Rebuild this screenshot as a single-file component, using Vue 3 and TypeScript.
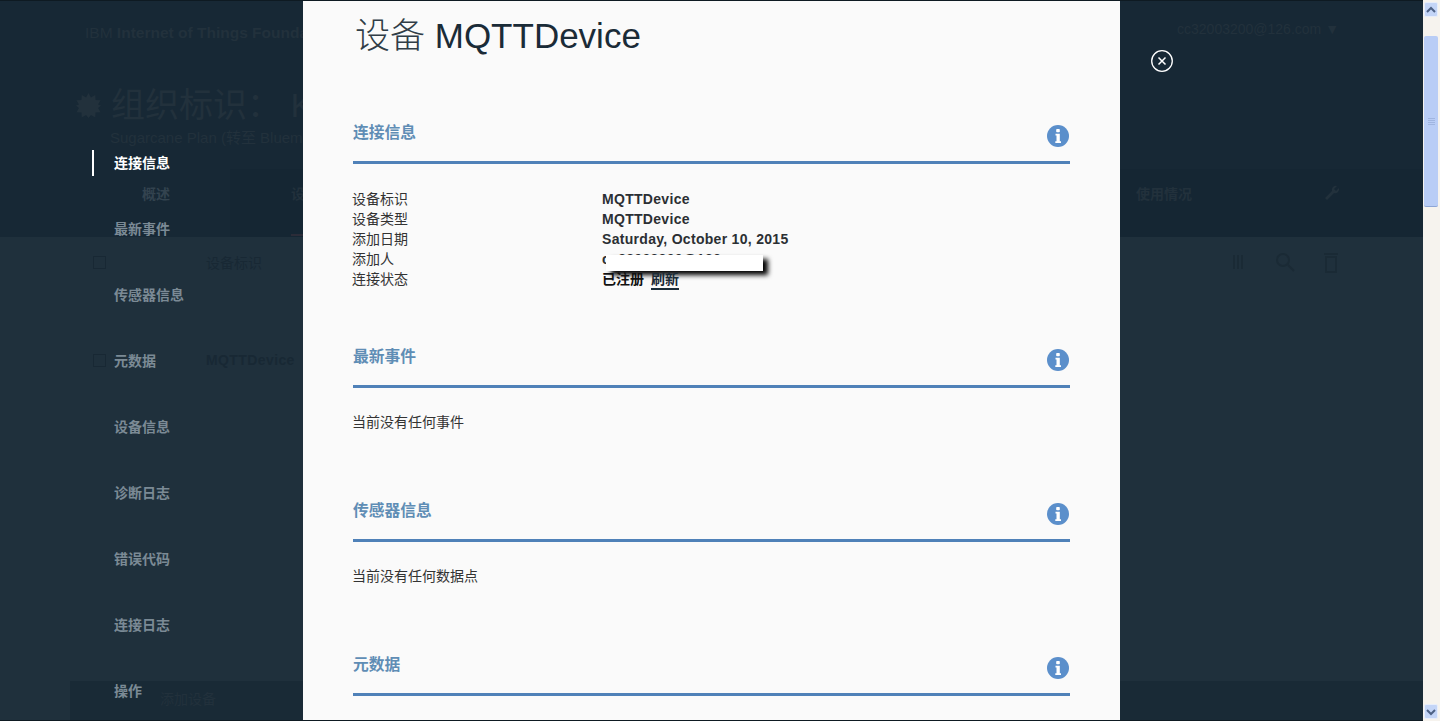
<script setup lang="ts">
interface Section {
  title: string;
  empty?: string;
  rows?: { label: string; value: string }[];
}

const navItems = ['连接信息', '最新事件', '传感器信息', '元数据', '设备信息', '诊断日志', '错误代码', '连接日志', '操作'];

const sections: Section[] = [
  {
    title: '连接信息',
    rows: [
      { label: '设备标识', value: 'MQTTDevice' },
      { label: '设备类型', value: 'MQTTDevice' },
      { label: '添加日期', value: 'Saturday, October 10, 2015' },
    ],
  },
  { title: '最新事件', empty: '当前没有任何事件' },
  { title: '传感器信息', empty: '当前没有任何数据点' },
  { title: '元数据' },
];
</script>

<template>
  <div class="viewport">
    <div class="page">
      <div class="backdrop">
        <header class="dash-header">
          <div class="topbar">
            <span class="brand"><span class="ibm">IBM</span> Internet of Things Foundation</span>
            <span class="account">cc32003200@126.com ▼</span>
          </div>
          <div class="org">
            <svg class="gear" viewBox="0 0 28 28" fill="currentColor">
              <path d="M14 1l2.500 4.600 4.500-2.600 0.300 5.200 5.200 0.300-2.600 4.500 3.100 1-3.100 2.500 2.600 4.500-5.200 0.300-0.300 5.200-4.500-2.600-2.500 3.100-2.500-3.100-4.500 2.600-0.300-5.200-5.200-0.300 2.600-4.500-3.100-2.500 3.100-1-2.600-4.500 5.200-0.300 0.300-5.200 4.500 2.600z" />
            </svg>
            <span class="org-name">组织标识： KY</span>
          </div>
          <div class="plan">Sugarcane Plan (转至 Bluemix 板</div>
          <nav class="tabs">
            <span class="tab tab--first">概述</span>
            <div class="tabs-rest">
              <span class="tab tab--marked">设备</span>
              <span class="tab tab--usage">使用情况</span>
              <svg class="wrench" viewBox="0 0 16 16" fill="currentColor">
                <path d="M15 3l-3 3-2-2 3-3a4 4 0 0 0-5 5L1 13l2 2 7-7a4 4 0 0 0 5-5z" />
              </svg>
            </div>
          </nav>
        </header>
        <section class="dash-body">
          <div class="table-head">
            <span class="check"></span>
            <span class="col-id">设备标识</span>
            <svg class="table-tools" viewBox="0 0 110 26" fill="none" stroke="currentColor" stroke-width="2">
              <path d="M3 6v14M7 6v14M11 6v14" />
              <circle cx="52" cy="11" r="6" />
              <path d="M57 16l6 6" />
              <path d="M93 5h14M95 8h10v15H95z" />
            </svg>
          </div>
          <div class="table-row">
            <span class="check"></span>
            <span class="col-id col-id--bold">MQTTDevice</span>
          </div>
          <div class="add-bar">添加设备</div>
        </section>
      </div>

      <div class="scrim">
        <aside class="side-nav">
          <a v-for="(item, i) in navItems" :key="item" class="nav-item" :class="{ 'nav-item--active': i === 0 }">{{ item }}</a>
        </aside>

        <main class="modal">
          <h1 class="modal-title"><span class="modal-title-cjk">设备</span> MQTTDevice</h1>

          <section v-for="(section, i) in sections" :key="section.title" class="block" :class="{ 'block--first': i === 0 }">
            <div class="block-head">
              <h2 class="block-title">{{ section.title }}</h2>
              <svg class="info" viewBox="0 0 22 22">
                <circle cx="11" cy="11" r="11" fill="#5b8fcb" />
                <rect x="9.200" y="4" width="3.600" height="3.200" rx="0.800" fill="#fff" />
                <path d="M8.500 8.800h4.300v7.400h1.200v1.800H8.300v-1.800h1.200v-5.600H8.500z" fill="#fff" />
              </svg>
            </div>
            <div v-if="section.rows" class="rows">
              <template v-for="row in section.rows" :key="row.label">
                <span class="row-label">{{ row.label }}</span>
                <span class="row-value">{{ row.value }}</span>
              </template>
              <span class="row-label">添加人</span>
              <span class="row-value row-value--mail">cc32003200@126.com<i class="redact"></i></span>
              <span class="row-label">连接状态</span>
              <span class="row-value row-value--status">已注册 <a class="refresh">刷新</a></span>
            </div>
            <p v-if="section.empty" class="empty">{{ section.empty }}</p>
          </section>
        </main>

        <div class="close-col">
          <button type="button" class="close" aria-label="关闭">
            <svg viewBox="0 0 22 22" fill="none" stroke="#fff">
              <circle cx="11" cy="11" r="10.300" stroke-width="1.300" />
              <path d="M7.500 7.500l7 7M14.500 7.500l-7 7" stroke-width="1.500" />
            </svg>
          </button>
        </div>
      </div>
    </div>

    <div class="scrollbar">
      <span class="sb-btn">
        <svg viewBox="0 0 10 8" fill="none" stroke="#4d6185" stroke-width="2"><path d="M1 6l4-4 4 4" /></svg>
      </span>
      <div class="sb-track">
        <span class="sb-thumb"><i></i><i></i><i></i><i></i></span>
      </div>
      <span class="sb-btn">
        <svg viewBox="0 0 10 8" fill="none" stroke="#4d6185" stroke-width="2"><path d="M1 2l4 4 4-4" /></svg>
      </span>
    </div>
  </div>
</template>

<style>
html,
body {
  margin: 0;
  overflow: hidden;
}
</style>

<style scoped>
.viewport {
  display: flex;
  width: 1440px;
  height: 721px;
  overflow: hidden;
  font-family: "Liberation Sans", "Noto Sans CJK SC", sans-serif;
  font-size: 14px;
}

.page {
  position: relative;
  flex: 1;
  min-width: 0;
  box-sizing: border-box;
  border-top: 1px solid #0e1a22;
  border-bottom: 1px solid #0e1a22;
}

/* dimmed dashboard behind the dialog */
.backdrop {
  display: flex;
  flex-direction: column;
  height: 100%;
  color: #22313c;
}

.dash-header {
  height: 236px;
  box-sizing: border-box;
  background: #172835;
}

.topbar {
  display: flex;
  justify-content: space-between;
  padding: 20px 84px 0 85px;
  height: 51px;
  box-sizing: border-box;
}

.brand {
  font-weight: 700;
  font-size: 15.500px;
  line-height: 24px;
}

.ibm {
  font-weight: 400;
}

.account {
  line-height: 16px;
}

.org {
  display: flex;
  align-items: center;
  gap: 9px;
  padding-left: 75px;
  height: 46px;
  margin-top: 30px;
}

.gear {
  width: 27px;
  height: 27px;
}

.org-name {
  font-size: 34px;
  line-height: 46px;
}

.plan {
  padding-left: 110px;
  font-size: 15px;
  line-height: 20px;
}

.tabs {
  display: flex;
  margin-top: 21px;
  height: 69px;
}

.tab {
  line-height: 50px;
  font-weight: 700;
  font-size: 14px;
}

.tab--first {
  width: 230px;
  box-sizing: border-box;
  padding-left: 142px;
  color: #33434f;
}

.tabs-rest {
  flex: 1;
  display: flex;
  background: #152633;
  padding-left: 61px;
  padding-right: 83px;
  align-items: flex-start;
}

.tab--marked {
  height: 65px;
  width: 60px;
  border-bottom: 2px solid #2b2c38;
}

.tab--usage {
  margin-left: auto;
  margin-right: 132px;
}

.wrench {
  width: 16px;
  height: 16px;
  margin-top: 16px;
}

.dash-body {
  position: relative;
  flex: 1;
  display: flex;
  flex-direction: column;
  background: #1f303c;
  color: #182834;
}

.table-head,
.table-row {
  display: flex;
  align-items: center;
  padding-left: 93px;
}

.table-head {
  height: 50px;
}

.table-row {
  height: 50px;
  margin-top: 48px;
}

.check {
  width: 11px;
  height: 11px;
  border: 1px solid #182834;
}

.col-id {
  margin-left: 100px;
}

.col-id--bold {
  font-weight: 700;
  letter-spacing: 0.4px;
}

.table-tools {
  width: 110px;
  height: 26px;
  margin-left: auto;
  margin-right: 82px;
  color: #1a2a35;
}

.add-bar {
  margin: auto 0 0 70px;
  height: 39px;
  line-height: 36px;
  padding-left: 90px;
  background: #192a36;
  color: #22313c;
  font-size: 14px;
}

/* dialog layer */
.scrim {
  position: absolute;
  inset: 0;
  display: flex;
  align-items: flex-start;
}

.side-nav {
  width: 303px;
  flex: none;
  box-sizing: border-box;
  padding: 149px 0 0 92px;
  display: flex;
  flex-direction: column;
  gap: 40px;
}

.nav-item {
  height: 26px;
  line-height: 26px;
  padding-left: 22px;
  font-weight: 700;
  font-size: 14px;
  color: #7b8a95;
}

.nav-item--active {
  color: #fff;
  padding-left: 20px;
  border-left: 2px solid #fff;
}

.modal {
  width: 817px;
  height: 719px;
  flex: none;
  box-sizing: border-box;
  padding: 0 50px;
  background: #fafafa;
  overflow: hidden;
}

.modal-title {
  margin: 13px 0 0 2px;
  font-size: 35px;
  line-height: 44px;
  font-weight: 400;
  color: #1a2b37;
}

.modal-title-cjk {
  color: #303d47;
  font-weight: 300;
}

.block--first {
  margin-top: 64px;
}

.block {
  display: block;
}

.block-head {
  display: flex;
  align-items: flex-end;
  justify-content: space-between;
  padding-bottom: 14px;
  border-bottom: 3px solid #4f81b8;
}

.block-title {
  margin: 0 0 3px;
  font-size: 15.750px;
  line-height: 22px;
  font-weight: 700;
  color: #5f8db5;
}

.info {
  width: 22px;
  height: 22px;
  flex: none;
  margin-right: 1px;
}

.rows {
  display: grid;
  grid-template-columns: 250px 1fr;
  grid-auto-rows: 20px;
  margin: 25px 0 57px -1px;
  line-height: 20px;
  color: #333;
}

.row-value {
  position: relative;
  font-weight: 700;
  letter-spacing: 0.3px;
  color: #2b2f33;
}

.row-value--mail {
  white-space: nowrap;
}

.redact {
  position: absolute;
  left: 4px;
  top: 6px;
  width: 157px;
  height: 16px;
  background: #fff;
  box-shadow: 5px 4px 5px #000;
}

.row-value--status {
  color: #111;
  letter-spacing: 0;
}

.refresh {
  margin-left: 3px;
  color: #1a2b37;
  border-bottom: 2px solid #1a2b37;
  padding-bottom: 1px;
}

.empty {
  margin: 24px 0 68px -1px;
  line-height: 20px;
  color: #333;
}

.close-col {
  padding: 49px 0 0 31px;
}

.close {
  display: block;
  width: 22px;
  height: 22px;
  padding: 0;
  border: none;
  background: none;
}

.close svg {
  display: block;
}

/* browser scrollbar */
.scrollbar {
  width: 17px;
  flex: none;
  display: flex;
  flex-direction: column;
  padding: 2px 2px 2px 1px;
  box-sizing: border-box;
  background: #f6f3ee;
}

.sb-btn {
  height: 15px;
  flex: none;
  display: flex;
  align-items: center;
  justify-content: center;
  background: #c4d5f7;
  border: 1px solid #e8eefb;
  box-sizing: border-box;
  border-radius: 2px;
}

.sb-btn svg {
  width: 10px;
  height: 8px;
}

.sb-track {
  flex: 1;
  padding-top: 19px;
}

.sb-thumb {
  display: flex;
  flex-direction: column;
  align-items: center;
  justify-content: center;
  gap: 1px;
  height: 171px;
  box-sizing: border-box;
  background: #b9cdf6;
  border-bottom: 1px solid #8ea6d6;
  border-radius: 2px;
}

.sb-thumb i {
  display: block;
  width: 7px;
  height: 1px;
  background: #a0b5e0;
}
</style>
